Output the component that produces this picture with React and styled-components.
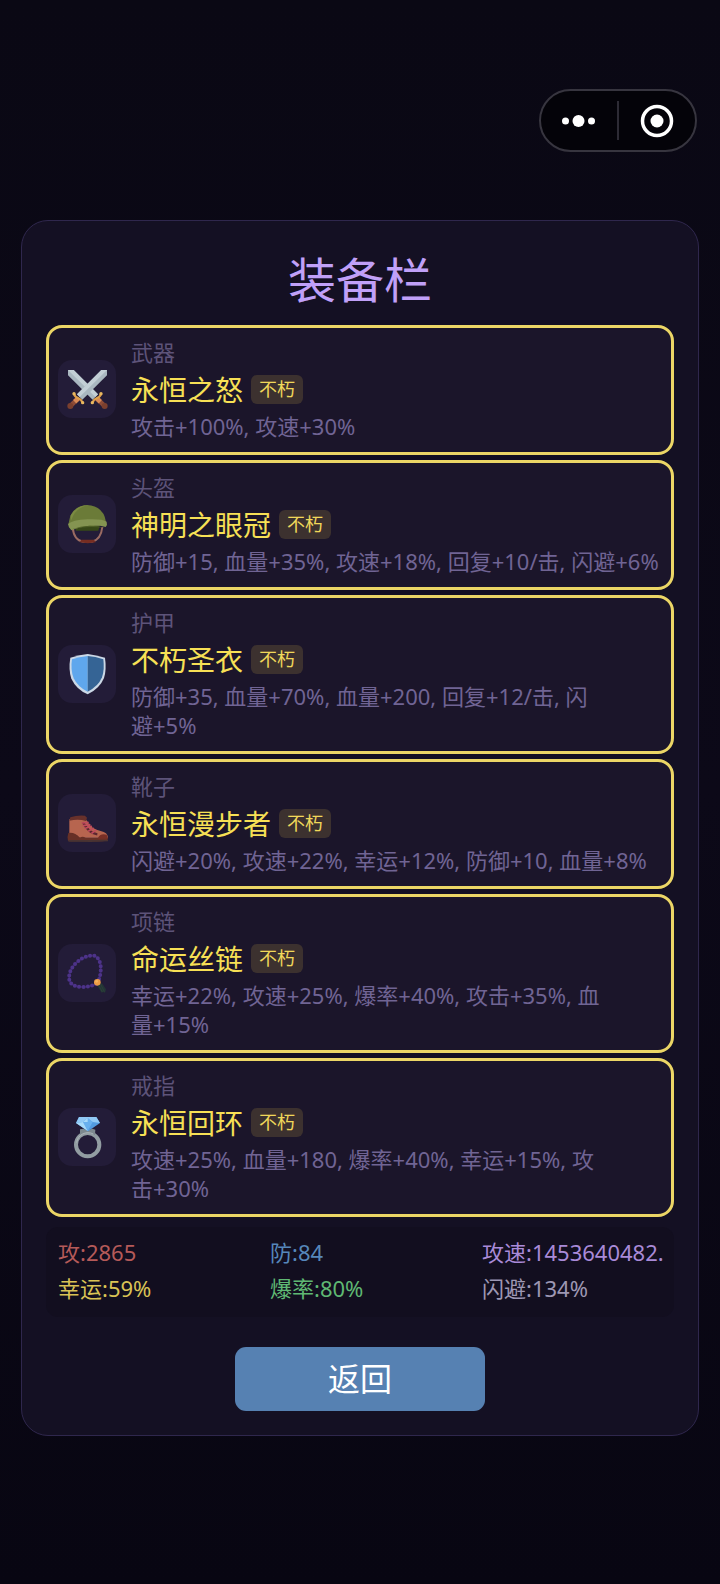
import React from "react";
import styled, { createGlobalStyle } from "styled-components";

const GlobalStyle = createGlobalStyle`
  * { box-sizing: border-box; }
  body {
    margin: 0;
    background: #0a0815;
    font-family: "Noto Sans", "Noto Sans CJK SC", sans-serif;
  }
`;

const Page = styled.div`
  min-height: 100vh;
  padding: 89px 21px 32px;
  background: linear-gradient(#0a0814, #0c0918 50%, #080612);
`;

const TopBar = styled.header`
  display: flex;
  justify-content: flex-end;
  padding-right: 2px;
  margin-bottom: 68px;
`;

const Capsule = styled.div`
  display: flex;
  align-items: center;
  width: 158px;
  height: 63px;
  border: 2px solid #37353f;
  border-radius: 32px;
  background: #040309;
`;

const CapsuleButton = styled.button`
  flex: 1;
  display: flex;
  justify-content: center;
  padding: 0;
  border: 0;
  background: none;
  cursor: pointer;
`;

const CapsuleDivider = styled.span`
  width: 2px;
  height: 39px;
  background: #2d2b35;
`;

const Panel = styled.main`
  display: flex;
  flex-direction: column;
  padding: 24px;
  border: 1px solid #2f274d;
  border-radius: 27px;
  background: #141023;
`;

const Title = styled.h1`
  margin: 0 0 10px;
  font-size: 48px;
  line-height: 70px;
  font-weight: 400;
  text-align: center;
  color: #c0a0f8;
`;

const EquipmentList = styled.ul`
  display: flex;
  flex-direction: column;
  gap: 5px;
  margin: 0;
  padding: 0;
  list-style: none;
`;

const EquipmentCard = styled.li`
  display: flex;
  align-items: center;
  gap: 15px;
  padding: 9px 9px 11px;
  border: 3px solid #ecd666;
  border-radius: 16px;
  background: #1b152a;
`;

const IconBox = styled.div`
  flex: none;
  width: 58px;
  height: 58px;
  border-radius: 14px;
  background: #231c38;

  svg { display: block; width: 100%; height: 100%; }
`;

const Details = styled.div`
  flex: 1;
  min-width: 0;
`;

const SlotName = styled.div`
  font-size: 22px;
  line-height: 30px;
  color: #5d5379;
`;

const NameRow = styled.div`
  display: flex;
  align-items: center;
  gap: 8px;
  height: 45px;
`;

const ItemName = styled.h2`
  margin: 0;
  font-size: 28px;
  line-height: 40px;
  font-weight: 400;
  color: #f7e055;
`;

const Badge = styled.span`
  padding: 0 8px;
  border-radius: 6px;
  font-size: 18px;
  line-height: 29px;
  color: #f0d85a;
  background: #3c312f;
`;

const Effects = styled.p`
  margin: 0;
  font-size: 22px;
  line-height: 29px;
  color: #706494;
  white-space: pre;
`;

const Stats = styled.div`
  display: grid;
  grid-template-columns: repeat(3, minmax(0, 1fr));
  gap: 6px 32px;
  margin-top: 10px;
  padding: 10px 12px 14px;
  border-radius: 12px;
  background: #120e1f;
`;

const Stat = styled.div`
  font-size: 22px;
  line-height: 30px;
  white-space: nowrap;
  color: ${(p) => p.$color};
`;

const BackButton = styled.button`
  align-self: center;
  width: 250px;
  height: 64px;
  margin-top: 30px;
  padding: 0;
  border: 0;
  border-radius: 11px;
  font-family: inherit;
  font-size: 32px;
  line-height: 48px;
  color: #fff;
  background: #5681b2;
  cursor: pointer;
`;

const Sword = () => (
  <g>
    <path d="M30 30h17l73 73-16 16-74-73z" fill="#a9b7c0" />
    <path d="M30 30h17l73 73-8 8z" fill="#c3cfd6" />
    <path d="M116 115l22 21" stroke="#8d4c37" strokeWidth="14" />
    <path d="M116 115l11 10" stroke="#d98a55" strokeWidth="14" />
    <circle cx="140" cy="138" r="9" fill="#7a3f2e" />
    <path d="M129 101q-2 9-12 13t-14 14" fill="none" stroke="#dfa04a" strokeWidth="7" />
    <circle cx="129" cy="101" r="5" fill="#e8b860" />
    <circle cx="103" cy="128" r="5" fill="#e8b860" />
  </g>
);

const SwordsIcon = () => (
  <svg viewBox="0 0 174 174" aria-hidden="true">
    <Sword />
    <g transform="translate(177 0) scale(-1 1)"><Sword /></g>
  </svg>
);

const HelmetIcon = () => (
  <svg viewBox="0 0 174 174" aria-hidden="true">
    <path d="M44 98Q48 136 75 140H102Q129 134 133 96" fill="none" stroke="#9b6b62" strokeWidth="6" />
    <path d="M50 92h75l-4 15H54z" fill="#374817" />
    <path d="M32 85Q38 34 87 30q50 3 57 51l-2 9-107 8z" fill="#6b7b38" />
    <path d="M40 76Q52 36 93 31q-38-1-56 31z" fill="#7b8b42" />
    <path d="M30 87q13-12 58-14t58 7q3 9-3 16Q98 84 40 106q-9-8-10-19z" fill="#849451" />
    <path d="M41 103Q90 84 139 99q-49-8-98 4z" fill="#4d5e25" />
    <path d="M70 134h38l5 8q-23 5-48 0z" fill="#762d22" />
  </svg>
);

const ShieldIcon = () => (
  <svg viewBox="0 0 174 174" aria-hidden="true">
    <path d="M37 38Q66 29 89 27q25 3 52 11 5 35-3 61-13 32-49 49-34-15-49-47-9-27-3-63z" fill="#cbd8e6" />
    <path d="M42 43q22-8 47-10v107q-29-13-42-40-10-26-5-57z" fill="#5fa7ed" />
    <path d="M89 33q23 1 47 10 4 32-4 54-11 27-43 43z" fill="#356495" />
  </svg>
);

const BootIcon = () => (
  <svg viewBox="0 0 174 174" aria-hidden="true">
    <path d="M34 76q23-6 47-4l10 15q11 19 37 24 21 4 22 20H34z" fill="#b7654f" />
    <path d="M37 70q20-7 44-5l6 6-3 10q-23-7-50-1z" fill="#68312b" />
    <path d="M31 117q18-4 35 14 8-6 17 1h66v8q-29 4-53 1-20-4-34 0-16 2-32 0-3-14 1-24z" fill="#673026" />
    <path d="M30 138h120v4l-52 2-66-1z" fill="#493332" />
    <path d="M75 85q17 32 43 36" fill="none" stroke="#5c2631" strokeWidth="7" />
    <path d="M73 87l17-2M76 95l19-3M82 103l18-6M92 111l14-8M102 117l11-8" stroke="#c04a5c" strokeWidth="5" strokeLinecap="round" />
    <path d="M121 130q6-12 25-8l4 12h-30z" fill="#792f26" />
  </svg>
);

const NecklaceIcon = () => (
  <svg viewBox="0 0 174 174" aria-hidden="true">
    <path d="M119 118Q132 85 127 59 119 31 99 35 72 38 51 60 30 83 34 108 39 128 72 129 99 128 119 118" fill="none" stroke="#34225f" strokeWidth="6" />
    <path d="M119 118Q132 85 127 59 119 31 99 35 72 38 51 60 30 83 34 108 39 128 72 129 99 128 119 118" fill="none" stroke="#4d3389" strokeWidth="12" strokeLinecap="round" strokeDasharray="0 13" />
    <path d="M117 122l15-4 12 18-3 10-6-2-4 2q-8-11-14-24z" fill="#233536" />
    <path d="M122 124l11 20M128 121l11 22" stroke="#304538" strokeWidth="2" />
    <circle cx="118" cy="115" r="10" fill="#ed9b45" />
    <circle cx="116" cy="112" r="4" fill="#f6b35b" />
  </svg>
);

const RingIcon = () => (
  <svg viewBox="0 0 174 174" aria-hidden="true">
    <circle cx="89" cy="110" r="35" fill="none" stroke="#929da2" strokeWidth="12" />
    <path d="M66 64l10-2 13 5 14-5 9 3-1 16-17-6H81l-15 6z" fill="#7d898f" />
    <path d="M56 104a34 34 0 0 1 50-26" fill="none" stroke="#abb4b8" strokeWidth="3" />
    <path d="M63 27h52l11 18-36 25-36-25z" fill="#529be0" />
    <path d="M63 27h52l11 18-22-3-15-11-14 11-21 3z" fill="#91c9f5" />
    <path d="M75 42l14-12 15 12-15 27z" fill="#68b0ee" />
    <path d="M54 45l21-3 14 27zM75 42l14-12v12z" fill="#a8dafa" />
  </svg>
);

const equipment = [
  { slot: "武器", name: "永恒之怒", Icon: SwordsIcon, effects: "攻击+100%, 攻速+30%" },
  { slot: "头盔", name: "神明之眼冠", Icon: HelmetIcon, effects: "防御+15, 血量+35%, 攻速+18%, 回复+10/击, 闪避+6%" },
  { slot: "护甲", name: "不朽圣衣", Icon: ShieldIcon, effects: "防御+35, 血量+70%, 血量+200, 回复+12/击, 闪\n避+5%" },
  { slot: "靴子", name: "永恒漫步者", Icon: BootIcon, effects: "闪避+20%, 攻速+22%, 幸运+12%, 防御+10, 血量+8%" },
  { slot: "项链", name: "命运丝链", Icon: NecklaceIcon, effects: "幸运+22%, 攻速+25%, 爆率+40%, 攻击+35%, 血\n量+15%" },
  { slot: "戒指", name: "永恒回环", Icon: RingIcon, effects: "攻速+25%, 血量+180, 爆率+40%, 幸运+15%, 攻\n击+30%" },
];

const stats = [
  { text: "攻:2865", color: "#b55a59" },
  { text: "防:84", color: "#5687ba" },
  { text: "攻速:1453640482.", color: "#a98ad8" },
  { text: "幸运:59%", color: "#d9c255" },
  { text: "爆率:80%", color: "#5fb873" },
  { text: "闪避:134%", color: "#9d97b3" },
];

export default function App() {
  return (
    <>
      <GlobalStyle />
      <Page>
        <TopBar>
          <Capsule>
            <CapsuleButton aria-label="更多">
              <svg width="34" height="34" viewBox="0 0 34 34" fill="#fff">
                <circle cx="3.5" cy="17" r="3.5" />
                <circle cx="16.5" cy="17" r="6" />
                <circle cx="29.5" cy="17" r="3.5" />
              </svg>
            </CapsuleButton>
            <CapsuleDivider />
            <CapsuleButton aria-label="关闭">
              <svg width="34" height="34" viewBox="0 0 34 34">
                <circle cx="17" cy="17" r="14.5" fill="none" stroke="#fff" strokeWidth="3.5" />
                <circle cx="17" cy="17" r="6.5" fill="#fff" />
              </svg>
            </CapsuleButton>
          </Capsule>
        </TopBar>
        <Panel>
          <Title>装备栏</Title>
          <EquipmentList>
            {equipment.map(({ slot, name, Icon, effects }) => (
              <EquipmentCard key={slot}>
                <IconBox><Icon /></IconBox>
                <Details>
                  <SlotName>{slot}</SlotName>
                  <NameRow>
                    <ItemName>{name}</ItemName>
                    <Badge>不朽</Badge>
                  </NameRow>
                  <Effects>{effects}</Effects>
                </Details>
              </EquipmentCard>
            ))}
          </EquipmentList>
          <Stats>
            {stats.map((s) => (
              <Stat key={s.text} $color={s.color}>{s.text}</Stat>
            ))}
          </Stats>
          <BackButton>返回</BackButton>
        </Panel>
      </Page>
    </>
  );
}
